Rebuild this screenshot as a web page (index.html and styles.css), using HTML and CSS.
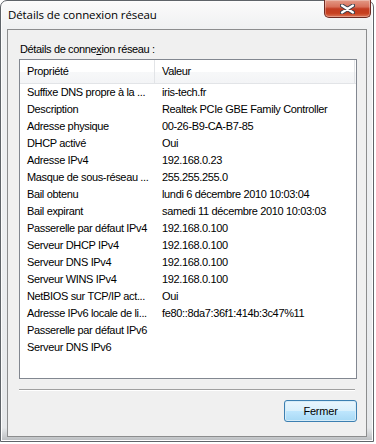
FILE: index.html
```html
<!DOCTYPE html>
<html lang="fr">
<head>
    <meta charset="UTF-8">
    <title>Détails de connexion réseau</title>
    <link rel="stylesheet" href="styles.css">
</head>
<body>

    <div class="window">
        <div class="titlebar">
            <div class="title">Détails de connexion réseau</div>
            <button class="close-button">
                <svg width="15" height="10" viewBox="0 0 15 10">
                    <path d="M2 1.5 L13 8.5 M13 1.5 L2 8.5" stroke="#3a3f4a" stroke-width="4.2" stroke-linecap="round"/>
                    <path d="M2 1.5 L13 8.5 M13 1.5 L2 8.5" stroke="#ffffff" stroke-width="2.2" stroke-linecap="round"/>
                </svg>
            </button>
        </div>

        <div class="client">
            <div class="group-label">Détails de conne<u>x</u>ion réseau :</div>

            <div class="listview">
                <div class="lv-header">
                    <div class="col-prop">Propriété</div>
                    <div class="col-val">Valeur</div>
                </div>
                <div class="lv-rows">
                    <div class="row"><div class="col-prop">Suffixe DNS propre à la ...</div><div class="col-val">iris-tech.fr</div></div>
                    <div class="row"><div class="col-prop">Description</div><div class="col-val">Realtek PCIe GBE Family Controller</div></div>
                    <div class="row"><div class="col-prop">Adresse physique</div><div class="col-val">00-26-B9-CA-B7-85</div></div>
                    <div class="row"><div class="col-prop">DHCP activé</div><div class="col-val">Oui</div></div>
                    <div class="row"><div class="col-prop">Adresse IPv4</div><div class="col-val">192.168.0.23</div></div>
                    <div class="row"><div class="col-prop">Masque de sous-réseau ...</div><div class="col-val">255.255.255.0</div></div>
                    <div class="row"><div class="col-prop">Bail obtenu</div><div class="col-val">lundi 6 décembre 2010 10:03:04</div></div>
                    <div class="row"><div class="col-prop">Bail expirant</div><div class="col-val">samedi 11 décembre 2010 10:03:03</div></div>
                    <div class="row"><div class="col-prop">Passerelle par défaut IPv4</div><div class="col-val">192.168.0.100</div></div>
                    <div class="row"><div class="col-prop">Serveur DHCP IPv4</div><div class="col-val">192.168.0.100</div></div>
                    <div class="row"><div class="col-prop">Serveur DNS IPv4</div><div class="col-val">192.168.0.100</div></div>
                    <div class="row"><div class="col-prop">Serveur WINS IPv4</div><div class="col-val">192.168.0.100</div></div>
                    <div class="row"><div class="col-prop">NetBIOS sur TCP/IP act...</div><div class="col-val">Oui</div></div>
                    <div class="row"><div class="col-prop">Adresse IPv6 locale de li...</div><div class="col-val">fe80::8da7:36f1:414b:3c47%11</div></div>
                    <div class="row"><div class="col-prop">Passerelle par défaut IPv6</div><div class="col-val"></div></div>
                    <div class="row"><div class="col-prop">Serveur DNS IPv6</div><div class="col-val"></div></div>
                </div>
            </div>

            <div class="separator"></div>

            <div class="footer">
                <button class="btn-default">Fermer</button>
            </div>
        </div>
    </div>

</body>
</html>
```

FILE: styles.css
```css
* { margin: 0; padding: 0; box-sizing: border-box; }
body { background: #ffffff; font-family: "Liberation Sans", Arial, sans-serif; font-size: 11px; letter-spacing: -0.35px; color: #000; }

.window { width: 374px; height: 442px; border: 1px solid #5f6469; border-radius: 7px 7px 0 0; padding: 0 6px 4px 6px; display: flex; flex-direction: column;
    background: linear-gradient(#fbfbfb 0%, #f0f1f2 6%, #eceef0 60%, #e6e8ea 97%, #b9bcbf 100%); box-shadow: inset 0 0 0 1px #fdfdfd; }

.titlebar { height: 28px; display: flex; justify-content: space-between; align-items: flex-start; }
.title { font-family: "Open Sans", "Noto Sans", sans-serif; font-size: 11.5px; line-height: 16px; padding: 6px 0 0 1px; color: #000; letter-spacing: -0.1px; }
.close-button { width: 47px; height: 18px; margin-right: -4px; margin-top: -1px; border: 1px solid #6e2a22; border-top: none; border-radius: 0 0 5px 5px; display: flex; align-items: center; justify-content: center;
    background: linear-gradient(#e39a87 0%, #d8705a 40%, #c23c22 52%, #c7401f 78%, #dc7658 100%); box-shadow: inset 0 0 0 1px rgba(255, 255, 255, 0.3); }

.client { flex: 1; background: #f0f0f0; border: 1px solid #8c8d8e; padding: 12px 9px 14px 11px; display: flex; flex-direction: column; }
.group-label { line-height: 14px; padding-left: 1px; margin-bottom: 3px; }
.group-label u { text-decoration: underline; }

.listview { height: 320px; border: 1px solid #828790; background: #fff; }
.lv-header { height: 24px; display: flex; align-items: center; background: linear-gradient(#ffffff 0%, #ffffff 50%, #f7f8f9 51%, #f3f4f6 100%); border-bottom: 1px solid #e2e4e7; }
.lv-header .col-prop { height: 24px; line-height: 23px; border-right: 1px solid #e2e4e7; }
.lv-header .col-val { flex: 1; height: 24px; line-height: 23px; border-right: 1px solid #e2e4e7; margin-right: 1px; }

.row { height: 17px; display: flex; align-items: center; line-height: 17px; }
.col-prop { width: 135px; padding-left: 7px; white-space: nowrap; }
.col-val { padding-left: 7px; white-space: nowrap; }

.separator { height: 1px; background: #a0a0a0; margin: 10px 2px 10px 0; box-shadow: 0 1px 0 #ffffff; }

.footer { display: flex; justify-content: flex-end; }
.btn-default { width: 73px; height: 22px; font-family: "Liberation Sans", Arial, sans-serif; font-size: 11px; letter-spacing: -0.2px; color: #000; border: 1px solid #3c7fb1; border-radius: 3px;
    background: linear-gradient(#eaf6fd 0%, #d9f0fc 50%, #bee6fd 51%, #a7d9f5 100%); box-shadow: inset 0 0 0 1px #d6ecf8; }
```
